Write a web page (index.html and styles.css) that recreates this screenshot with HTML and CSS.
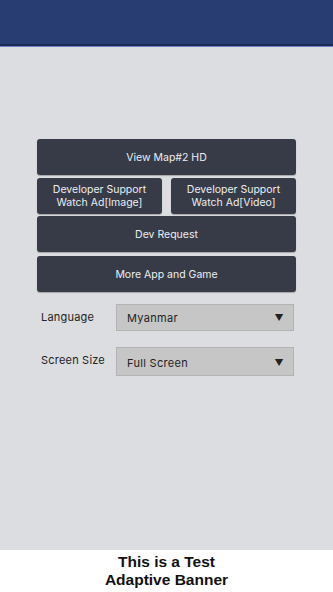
FILE: index.html
```html
<!DOCTYPE html>
<html lang="en">
<head>
    <meta charset="UTF-8">
    <meta name="viewport" content="width=device-width, initial-scale=1.0">
    <title>Map Viewer</title>
    <link rel="stylesheet" href="styles.css">
</head>
<body>
    <header class="top-bar"></header>

    <main class="menu">
        <button class="btn">View Map#2 HD</button>
        <div class="btn-pair">
            <button class="btn">Developer Support<br>Watch Ad[Image]</button>
            <button class="btn">Developer Support<br>Watch Ad[Video]</button>
        </div>
        <button class="btn btn-dev">Dev Request</button>
        <button class="btn btn-more">More App and Game</button>

        <div class="setting">
            <span class="setting-label">Language</span>
            <div class="select">
                <span>Myanmar</span>
                <span class="arrow">&#9660;</span>
            </div>
        </div>
        <div class="setting setting-size">
            <span class="setting-label">Screen Size</span>
            <div class="select">
                <span>Full Screen</span>
                <span class="arrow">&#9660;</span>
            </div>
        </div>
    </main>

    <footer class="banner">
        This is a Test<br>Adaptive Banner
    </footer>
</body>
</html>
```

FILE: styles.css
```css
body {
    margin: 0;
    height: 592px;
    display: flex;
    flex-direction: column;
    font-family: Inter, "Noto Sans", sans-serif;
    background-color: #dcdde0;
    overflow: hidden;
}
.top-bar {
    height: 44px;
    flex-shrink: 0;
    background-color: #283d71;
    border-bottom: 2px solid #1b2a57;
    box-shadow: 0 1px 0 #6f82c0;
}
.menu {
    flex: 1;
    display: flex;
    flex-direction: column;
    padding: 93px 37px 0 37px;
}
.btn {
    height: 36px;
    border: none;
    border-radius: 3px;
    background-color: #363b47;
    color: #eceef2;
    font-family: Inter, "Noto Sans", sans-serif;
    font-size: 10.5px;
    line-height: 13px;
    padding: 0;
    box-shadow: 0 1px 1px rgba(0, 0, 0, 0.25);
}
.btn-pair {
    display: flex;
    gap: 9px;
    margin-top: 3px;
}
.btn-pair .btn {
    flex: 1;
}
.btn-dev {
    margin-top: 2px;
}
.btn-more {
    margin-top: 4px;
}
.setting {
    display: flex;
    align-items: flex-start;
    margin-top: 12px;
    margin-right: 2px;
}
.setting-size {
    margin-top: 16px;
}
.setting-label {
    width: 75px;
    padding-left: 4px;
    padding-top: 6px;
    font-size: 11px;
    color: #222;
    letter-spacing: 0.2px;
}
.select {
    flex: 1;
    height: 27px;
    box-sizing: border-box;
    display: flex;
    align-items: center;
    justify-content: space-between;
    padding: 0 9px 0 10px;
    background-color: #c6c6c6;
    border: 1px solid #b3b3b3;
    font-size: 11px;
    color: #1e1e1e;
    letter-spacing: 0.3px;
}
.setting-size .select {
    height: 29px;
    padding-top: 2px;
}
.arrow {
    font-size: 9px;
    color: #222;
}
.banner {
    height: 42px;
    flex-shrink: 0;
    background-color: #fff;
    text-align: center;
    font-family: "Liberation Sans", Arial, sans-serif;
    font-weight: bold;
    font-size: 15.5px;
    line-height: 18px;
    color: #111;
    padding-top: 3px;
    box-sizing: border-box;
}
```
